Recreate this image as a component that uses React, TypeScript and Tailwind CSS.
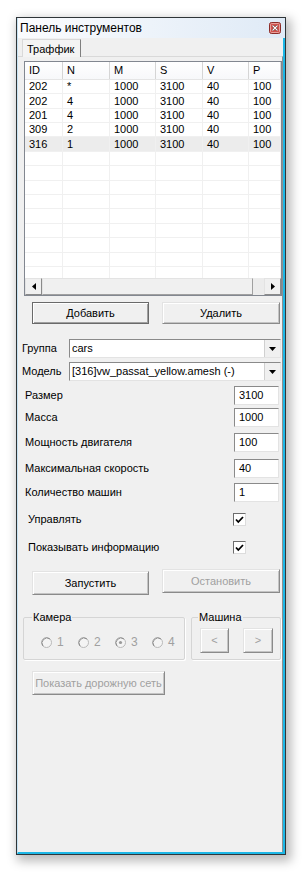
import React from "react";

const rows = [
  { id: "202", n: "*", m: "1000", s: "3100", v: "40", p: "100" },
  { id: "202", n: "4", m: "1000", s: "3100", v: "40", p: "100" },
  { id: "201", n: "4", m: "1000", s: "3100", v: "40", p: "100" },
  { id: "309", n: "2", m: "1000", s: "3100", v: "40", p: "100" },
  { id: "316", n: "1", m: "1000", s: "3100", v: "40", p: "100" },
];

const heads = ["ID", "N", "M", "S", "V", "P"];
const colW = ["w-[38px]", "w-[47px]", "w-[46px]", "w-[47px]", "w-[46px]", "flex-1"];
const rowH = ["h-[14px]", "h-[15px]", "h-[14px]", "h-[14px]", "h-[15px]"];

function Btn({
  children,
  disabled,
  isDefault,
  className = "",
}: {
  children: React.ReactNode;
  disabled?: boolean;
  isDefault?: boolean;
  className?: string;
}) {
  return (
    <div
      className={
        "flex items-center justify-center whitespace-nowrap bg-[#f0f0f0] border " +
        (isDefault
          ? "border-[#6a6a6a] shadow-[inset_1px_1px_0_#ffffff,inset_-1px_-1px_0_#a0a0a0] "
          : "border-t-[#e3e3e3] border-l-[#e3e3e3] border-r-[#8a8a8a] border-b-[#8a8a8a] shadow-[inset_1px_1px_0_#ffffff,inset_-1px_-1px_0_#c4c4c4] ") +
        (disabled ? "text-[#a0a0a0] " : "text-black ") +
        className
      }
    >
      {children}
    </div>
  );
}

function Combo({ value }: { value: string }) {
  return (
    <div className="w-[212px] h-[19px] bg-white border border-t-[#8a8a8a] border-l-[#8a8a8a] border-r-[#e3e3e3] border-b-[#e3e3e3] flex items-center">
      <span className="flex-1 pl-[2px] truncate">{value}</span>
      <div className="w-[16px] h-[17px] bg-[#f0f0f0] border-l border-[#d0d0d0] flex items-center justify-center">
        <svg width="7" height="4" viewBox="0 0 7 4">
          <path d="M0 0h7L3.5 4z" fill="#000" />
        </svg>
      </div>
    </div>
  );
}

function Field({ label, value, mt }: { label: string; value: string; mt: string }) {
  return (
    <div className={"flex items-center h-[19px] pl-[7px] " + mt}>
      <span className="w-[209px]">{label}</span>
      <div className="w-[45px] h-[19px] bg-white border border-t-[#8a8a8a] border-l-[#8a8a8a] border-r-[#e3e3e3] border-b-[#e3e3e3] flex items-center pl-[4px]">
        {value}
      </div>
    </div>
  );
}

function Check({ label, mt }: { label: string; mt: string }) {
  return (
    <div className={"flex items-center h-[13px] pl-[10px] " + mt}>
      <span className="w-[205px]">{label}</span>
      <div className="w-[13px] h-[13px] bg-white border border-t-[#6d6d6d] border-l-[#6d6d6d] border-r-[#dcdcdc] border-b-[#dcdcdc] flex items-center justify-center">
        <svg width="9" height="8" viewBox="0 0 9 8">
          <path d="M1 3.5l2.3 2.5L8 1" stroke="#000" strokeWidth="1.8" fill="none" />
        </svg>
      </div>
    </div>
  );
}

function Radio({ label, checked, last }: { label: string; checked?: boolean; last?: boolean }) {
  return (
    <div className={"flex items-center gap-[5px] text-[#a0a0a0] text-[12px] " + (last ? "" : "w-[37px]")}>
      <svg width="11" height="11" viewBox="0 0 11 11">
        <circle cx="5.5" cy="5.5" r="5" fill="#f4f4f4" stroke="#b8b8b8" />
        <path d="M2 9A5 5 0 0 1 9 2" stroke="#8e8e8e" fill="none" />
        {checked && <circle cx="5.5" cy="5.5" r="1.6" fill="#9a9a9a" />}
      </svg>
      <span>{label}</span>
    </div>
  );
}

function Arrow({ dir }: { dir: "l" | "r" }) {
  return (
    <div className="w-[17px] h-[17px] border border-t-[#e3e3e3] border-l-[#e3e3e3] border-r-[#8a8a8a] border-b-[#8a8a8a] bg-[#f0f0f0] flex items-center justify-center">
      <svg width="4" height="7" viewBox="0 0 4 7">
        <path d={dir === "l" ? "M4 0v7L0 3.5z" : "M0 0v7l4-3.5z"} fill="#000" />
      </svg>
    </div>
  );
}

export default function App() {
  return (
    <div className="w-[302px] h-[872px] bg-white pt-[17px] pl-[16px] font-['Liberation_Sans',Arial,sans-serif] text-[11px] leading-[13px] text-black">
      <div className="w-[270px] h-[838px] border border-[#2f3538] shadow-[3px_4px_10px_2px_rgba(0,0,0,0.28)] flex flex-col bg-[#f0f0f0]">
        {/* title */}
        <div className="h-[20px] bg-gradient-to-r from-[#fbfcfe] to-[#dfeaf6] flex items-center justify-between pl-[2px] pr-[4px] text-[12px] border-l border-[#c7e3f3]">
          <span>Панель инструментов</span>
          <svg width="12" height="12" viewBox="0 0 12 12">
            <rect x="0.5" y="0.5" width="11" height="11" rx="2" fill="#d2544f" stroke="#8c2c28" />
            <rect x="1.5" y="1.5" width="9" height="9" rx="1" fill="none" stroke="#e9a09c" />
            <path d="M3.5 3.5l5 5M8.5 3.5l-5 5" stroke="#5a1a18" strokeWidth="2.4" />
            <path d="M3.5 3.5l5 5M8.5 3.5l-5 5" stroke="#fff" strokeWidth="1.2" />
          </svg>
        </div>

        <div className="flex-1 flex flex-col border-l border-l-[#c7e3f3] border-r-2 border-r-[#1db7e6] border-b-2 border-b-[#1db7e6] overflow-hidden">
          {/* tabs */}
          <div className="h-[18px] flex items-start pl-[4px]">
            <div className="relative z-10 mt-[1px] h-[18px] whitespace-nowrap bg-[#f4f4f4] border-t border-l border-t-[#d9d9d9] border-l-[#d9d9d9] border-r border-r-[#7f7f7f] pl-[4px] pr-[6px] pt-[3px]">
              Траффик
            </div>
          </div>

          <div className="flex-1 flex flex-col border-t border-t-[#d9d9d9] border-r border-r-[#8f8f8f]">
            {/* list */}
            <div className="ml-[6px] mt-[4px] w-[258px] h-[235px] border border-[#828790] bg-white flex flex-col">
              <div className="h-[18px] flex border-b border-[#e5e5e5] bg-gradient-to-b from-white to-[#f7f8fa]">
                {heads.map((h, i) => (
                  <div
                    key={h}
                    className={colW[i] + " shrink-0 border-r border-[#d5d5d5] pl-[4px] flex items-center"}
                  >
                    {h}
                  </div>
                ))}
              </div>
              <div className="flex-1 overflow-hidden">
                {rows.map((r, ri) => (
                  <div
                    key={ri}
                    className={
                      rowH[ri] + " flex border-b border-[#f0f0f0] " + (ri === 4 ? "bg-[#ececec]" : "")
                    }
                  >
                    {[r.id, r.n, r.m, r.s, r.v, r.p].map((c, i) => (
                      <div key={i} className={colW[i] + " shrink-0 border-r border-[#f0f0f0] pl-[4px] flex items-center"}>
                        {c}
                      </div>
                    ))}
                  </div>
                ))}
                {Array.from({ length: 10 }).map((_, ri) => (
                  <div key={ri} className={rowH[ri % 5] + " flex border-b border-[#f0f0f0]"}>
                    {colW.map((w, i) => (
                      <div key={i} className={w + " shrink-0 border-r border-[#f0f0f0]"} />
                    ))}
                  </div>
                ))}
              </div>
              <div className="h-[17px] flex bg-[#ececec]">
                <Arrow dir="l" />
                <div className="flex-1 mr-[11px] border border-t-[#e3e3e3] border-l-[#e3e3e3] border-r-[#a0a0a0] border-b-[#a0a0a0] bg-[#f0f0f0]" />
                <Arrow dir="r" />
              </div>
            </div>

            {/* add / delete */}
            <div className="flex mt-[6px] ml-[14px] gap-[13px]">
              <Btn isDefault className="w-[117px] h-[22px]">Добавить</Btn>
              <Btn className="w-[118px] h-[22px]">Удалить</Btn>
            </div>

            <div className="flex items-center mt-[15px] ml-[4px]">
              <span className="w-[47px]">Группа</span>
              <Combo value="cars" />
            </div>
            <div className="flex items-center mt-[4px] ml-[4px]">
              <span className="w-[47px]">Модель</span>
              <Combo value="[316]vw_passat_yellow.amesh (-)" />
            </div>

            <Field label="Размер" value="3100" mt="mt-[5px]" />
            <Field label="Масса" value="1000" mt="mt-[3px]" />
            <Field label="Мощность двигателя" value="100" mt="mt-[6px]" />
            <Field label="Максимальная скорость" value="40" mt="mt-[7px]" />
            <Field label="Количество машин" value="1" mt="mt-[5px]" />

            <Check label="Управлять" mt="mt-[11px]" />
            <Check label="Показывать информацию" mt="mt-[15px]" />

            <div className="flex items-start mt-[15px] ml-[14px] gap-[13px]">
              <Btn className="mt-[2px] w-[117px] h-[24px]">Запустить</Btn>
              <Btn disabled className="w-[118px] h-[24px]">Остановить</Btn>
            </div>

            <div className="flex mt-[15px] ml-[5px] gap-[6px]">
              <fieldset className="w-[162px] min-w-0 h-[50px] border border-[#d5d5d5] shadow-[1px_1px_0_#fff] rounded-[2px] pl-[17px]">
                <legend className="-ml-[9px] px-[1px] leading-[14px]">Камера</legend>
                <div className="flex mt-[12px]">
                  <Radio label="1" />
                  <Radio label="2" />
                  <Radio label="3" checked />
                  <Radio label="4" last />
                </div>
              </fieldset>
              <fieldset className="w-[90px] min-w-0 h-[50px] border border-[#d5d5d5] shadow-[1px_1px_0_#fff] rounded-[2px] pl-[8px]">
                <legend className="-ml-[2px] px-[1px] leading-[14px]">Машина</legend>
                <div className="flex gap-[14px] mt-[4px]">
                  <Btn disabled className="w-[29px] h-[25px]">&lt;</Btn>
                  <Btn disabled className="w-[30px] h-[25px]">&gt;</Btn>
                </div>
              </fieldset>
            </div>

            <Btn disabled className="mt-[11px] ml-[14px] w-[133px] h-[24px]">
              Показать дорожную сеть
            </Btn>
          </div>
        </div>
      </div>
    </div>
  );
}
